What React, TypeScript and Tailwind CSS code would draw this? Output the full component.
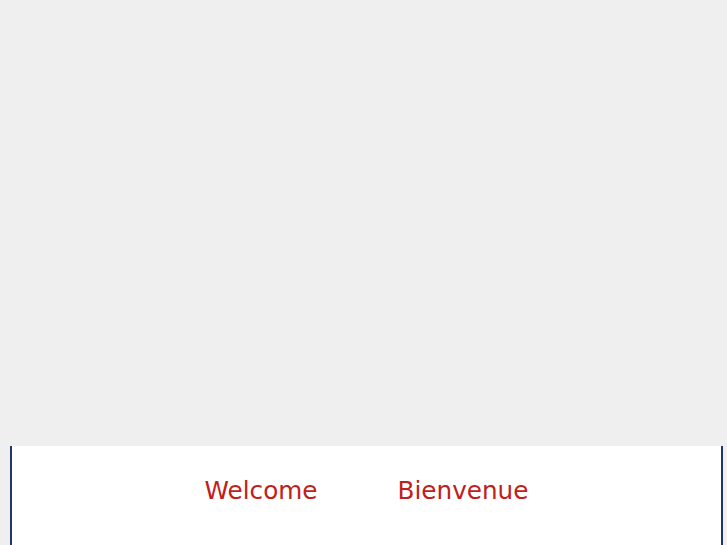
export default function App() {
  return (
    <div className="w-[727px] h-[545px] bg-[#efefef] flex flex-col overflow-hidden" style={{ fontFamily: '"DejaVu Sans", sans-serif' }}>
      <div className="h-[446px] shrink-0" />
      <div className="mx-[10px] w-[713px] flex-1 bg-white border-x-2 border-[#1d3866]">
        <div className="flex justify-center gap-[80px] pt-[30px] text-[24.7px] leading-[30px] text-[#c0201a]">
          <span>Welcome</span>
          <span>Bienvenue</span>
        </div>
      </div>
    </div>
  );
}
